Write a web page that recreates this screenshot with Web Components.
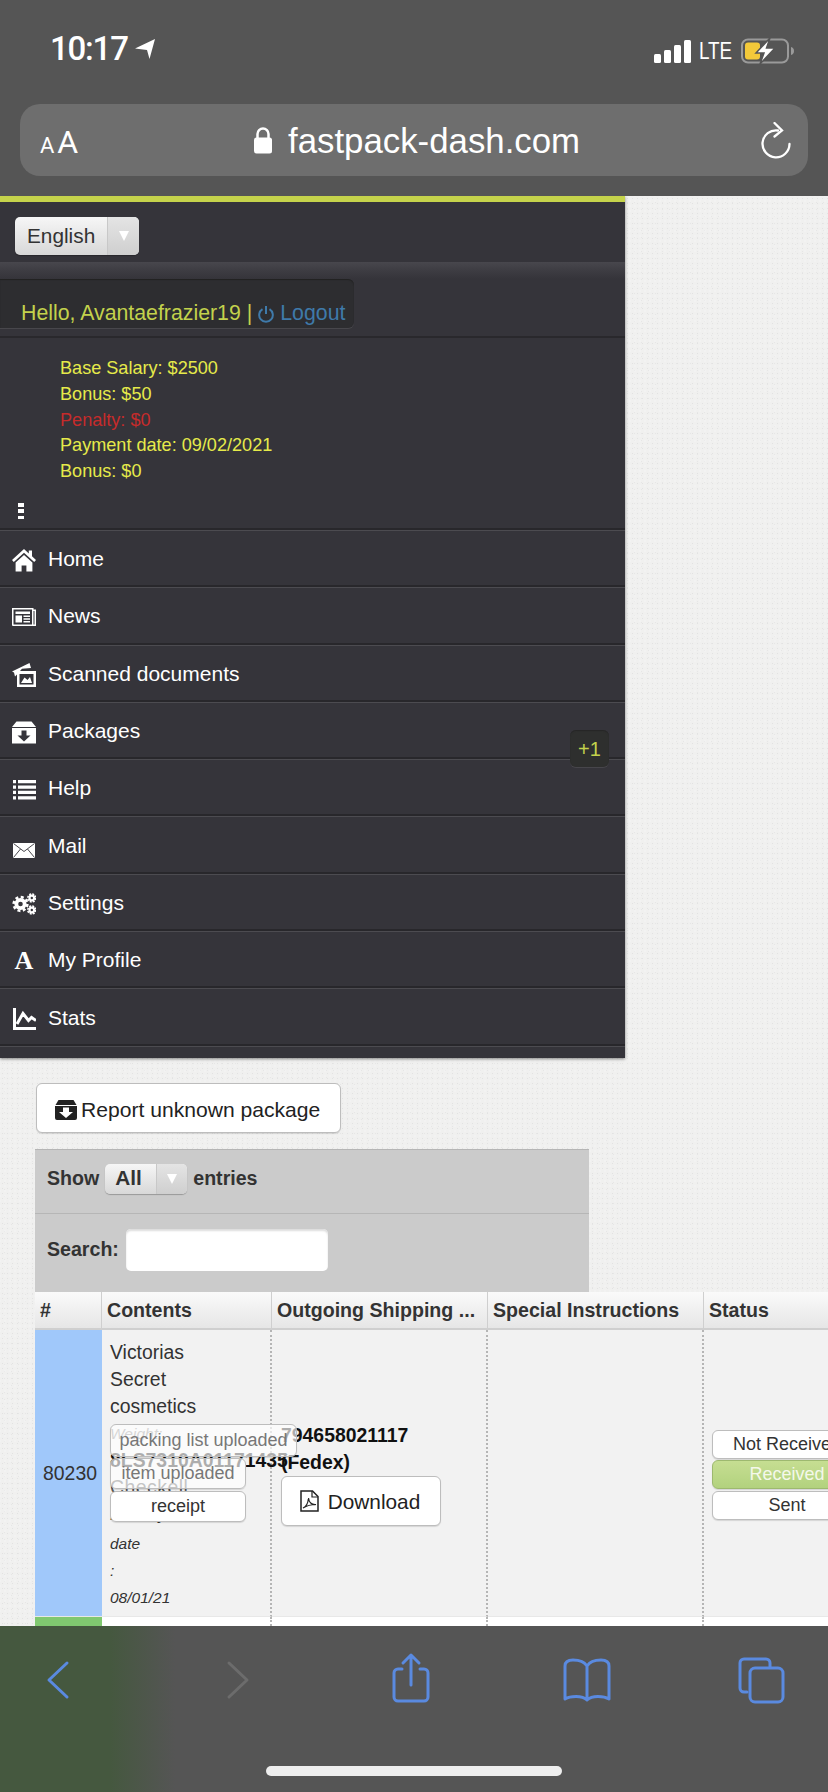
<!DOCTYPE html>
<html lang="en"><head><meta charset="utf-8"><title>fastpack-dash.com</title>
<style>
html,body{margin:0;padding:0;width:828px;height:1792px;overflow:hidden;font-family:"Liberation Sans",Arial,sans-serif;background:#555}
</style></head><body>
<fp-phone>
  <fp-status slot="top"></fp-status>
  <fp-urlbar slot="top"></fp-urlbar>
  <fp-panel>
    <fp-select label="English" w="124" h="38" sep="92"></fp-select>
    <fp-user slot="user"></fp-user>
    <fp-pay slot="pay"></fp-pay>
    <fp-nav label="Home"><svg viewBox="0 0 24 24"><path d="M12 1 L0 12 l1.800 1.900L12 4.800l10.200 9.100L24 12l-4-3.700V2.500h-3.200v2.900z"/><path d="M3.600 14.600 12 7l8.400 7.600V23.500h-6v-6h-4.800v6h-6z"/></svg></fp-nav>
    <fp-nav label="News"><svg viewBox="0 0 24 24"><path fill-rule="evenodd" d="M0 3h21.500v1.500H24V21H1a1 1 0 0 1-1-1zM1.500 4.500V19.500h18.500V4.500zM21.500 6v13.500h1V6z"/><path d="M3.500 6.500h14.500v2.500H3.500zM3.500 10.500h6.500v7H3.500zM11.500 10.500h6.500v1.500h-6.500zM11.500 13.300h6.500v1.500h-6.500zM11.500 16h6.500v1.500h-6.500z"/></svg></fp-nav>
    <fp-nav label="Scanned documents"><svg viewBox="0 0 24 24"><path fill-rule="evenodd" d="M5 8h19v16H5zM7.500 11v10.500H21.500V11z"/><path d="M9 20l3.500-5.500 3 2.500 2.500-3 2 6z"/><path d="M0 8.500 17.500 0l1.500 5-9 .8L4.500 12 3 13.500 2 9.500z"/></svg></fp-nav>
    <fp-nav label="Packages"><svg viewBox="0 0 24 24"><path d="M4.500 1.500h15L24 7H0z"/><path fill-rule="evenodd" d="M0 8h24v15.500H0zM9.500 10.500v5h-4l6.500 6 6.500-6h-4v-5z"/></svg></fp-nav>
    <fp-nav label="Help"><svg viewBox="0 0 24 24"><path d="M1 3h3v3.300H1zM6 3h18v3.300H6zM1 8.400h3v3.300H1zM6 8.400h18v3.300H6zM1 13.800h3v3.300H1zM6 13.800h18v3.300H6zM1 19.200h3v3.300H1zM6 19.200h18v3.300H6z"/></svg></fp-nav>
    <fp-nav label="Mail"><svg viewBox="0 0 24 24"><path d="M1 8h22v15H1z"/><path d="M1.500 8.500 12 16.500 22.500 8.500M1.500 22.500 8.500 14M22.500 22.500 15.500 14" fill="none" stroke="#35343a" stroke-width=".9"/></svg></fp-nav>
    <fp-nav label="Settings"><svg viewBox="0 0 24 24"><g fill="none" stroke="#fff"><circle cx="8.500" cy="12" r="4.200" stroke-width="3.800"/><circle cx="8.500" cy="12" r="6.900" stroke-width="2.500" stroke-dasharray="3 2.420"/><circle cx="19.800" cy="6" r="2.300" stroke-width="2.200"/><circle cx="19.800" cy="6" r="4" stroke-width="1.500" stroke-dasharray="2 1.140"/><circle cx="19.800" cy="18" r="2.300" stroke-width="2.200"/><circle cx="19.800" cy="18" r="4" stroke-width="1.500" stroke-dasharray="2 1.140"/></g></svg></fp-nav>
    <fp-nav label="My Profile"><span class="glyph">A</span></fp-nav>
    <fp-nav label="Stats"><svg viewBox="0 0 24 24"><path d="M1 1h3v19h20v3H1z"/><path d="M5 17 11 6.500l5.500 7 3-3 4.500 3" fill="none" stroke="#fff" stroke-width="3"/></svg></fp-nav>
    <fp-nav last></fp-nav>
    <fp-badge slot="badge">+1</fp-badge>
  </fp-panel>
  <fp-content slot="page">
    <fp-report></fp-report>
    <fp-filter></fp-filter>
    <fp-table></fp-table>
  </fp-content>
  <fp-toolbar slot="bottom"></fp-toolbar>
</fp-phone>
<script>
function def(name, html, setup){
  const tpl=document.createElement('template'); tpl.innerHTML=html;
  customElements.define(name,class extends HTMLElement{
    constructor(){super();this.attachShadow({mode:'open'}).appendChild(tpl.content.cloneNode(true));}
    connectedCallback(){ if(setup) setup(this,this.shadowRoot); }
  });
}
def('fp-phone',`<style>
:host{display:flex;flex-direction:column;width:828px;height:1792px;overflow:hidden;background:#555}
.top{display:block;height:196px;flex:none;background:#555}
.mid{position:relative;flex:none;height:1430px;overflow:hidden;
 background-color:#f0f0ef;
 background-image:radial-gradient(#e2e2e2 .8px,transparent 1px),radial-gradient(#f9f9f9 .8px,transparent 1px),radial-gradient(#e6e6e6 .7px,transparent .9px);
 background-size:5px 5px,5px 5px,7px 7px;background-position:0 0,2.500px 2.500px,1px 3px}
.bot{flex:none;height:166px}
</style><div class="top"><slot name="top"></slot></div>
<div class="mid"><slot></slot><slot name="page"></slot></div>
<div class="bot"><slot name="bottom"></slot></div>`);

def('fp-status',`<style>
:host{display:flex;justify-content:space-between;align-items:flex-start;height:104px;box-sizing:border-box;padding:33px 33px 0 50px;color:#fff}
.time{display:flex;align-items:center;gap:6px;font:500 33px/32px Roboto,sans-serif;letter-spacing:-1.200px;height:32px}
.r{display:flex;align-items:center;height:32px;gap:8px}
.bars{display:flex;align-items:flex-end;gap:3px;height:24px;margin-top:4px}
.bars i{display:block;width:7px;background:#fff;border-radius:1.500px}
.lte{display:block;font:500 23px/24px "Liberation Sans",sans-serif;margin-top:4px;width:34px;white-space:nowrap;transform:scaleX(.82);transform-origin:0 50%}
svg{display:block}
</style>
<div class="time"><span>10:17</span><svg width="22" height="22" viewBox="0 0 22 22" style="margin-top:0"><path d="M21 1 15.500 21l-2.500-9L1 10.500z" fill="#fff"/></svg></div>
<div class="r"><div class="bars"><i style="height:9px"></i><i style="height:13px"></i><i style="height:18px"></i><i style="height:23px"></i></div>
<span class="lte">LTE</span>
<svg width="54" height="26" viewBox="0 0 54 26" style="margin-top:3px"><rect x="1" y="1.500" width="46" height="23" rx="6" fill="none" stroke="#9a9a9a" stroke-width="2"/><rect x="4" y="4.500" width="15" height="17" rx="3" fill="#f3c93a"/><path d="M50 9c2 .5 3 2 3 4s-1 3.500-3 4z" fill="#9a9a9a"/><path d="M29 0 15 15h8l-4 11 15-16h-8.500z" fill="#fff" stroke="#555" stroke-width="1.500"/></svg></div>`);

def('fp-urlbar',`<style>
:host{display:flex;align-items:center;position:relative;margin:0 20px;height:72px;border-radius:20px;background:#6e6e6e;color:#fff}
.aa{position:absolute;left:20px;top:22px;display:flex;align-items:baseline;font:400 22px/32px Roboto,sans-serif}
.aa b{font-weight:400;font-size:32px;margin-left:3px}
.c{display:flex;align-items:center;gap:16px;margin-left:234px;padding-top:1px}
.u{font:400 34.800px/44px "Liberation Sans",sans-serif;white-space:nowrap;margin-top:1px}
svg{display:block}
.re{position:absolute;left:740px;top:18px}
</style>
<span class="aa">A<b>A</b></span>
<div class="c"><svg width="18" height="27" viewBox="0 0 18 27"><path d="M3.500 11V7a5.500 5.500 0 0 1 11 0v4" fill="none" stroke="#fff" stroke-width="2.500"/><rect y="10.500" width="18" height="16" rx="2.500" fill="#fff"/></svg><span class="u">fastpack-dash.com</span></div>
<svg class="re" width="32" height="37" viewBox="0 0 32 37"><path d="M18 8.500A13.500 13.500 0 1 0 29.500 22" fill="none" stroke="#fff" stroke-width="2.300" stroke-linecap="round"/><path d="M14.500 1l7.500 7.500-7.500 6" fill="none" stroke="#fff" stroke-width="2.300" stroke-linecap="round"/></svg>`);

def('fp-panel',`<style>
:host{display:block;position:relative;width:625px;height:862px;box-sizing:border-box;background:#35343a;border-top:6px solid #c5d34b;box-shadow:0 1px 3px rgba(0,0,0,.45)}
.lang{height:60px;box-sizing:border-box;padding:15px 0 0 15px}
.badge{position:absolute;left:570px;top:528px}
</style>
<div class="lang"><slot name="lang"></slot></div><div class="rest"><slot name="user"></slot><slot name="pay"></slot><slot></slot><div class="badge"><slot name="badge"></slot></div></div>`,(el)=>{
  el.querySelector('fp-select').setAttribute('slot','lang');
});

def('fp-select',`<style>
:host{display:inline-flex;box-sizing:border-box;border-radius:5px;background:linear-gradient(#f6f6f6,#d8d8d8);box-shadow:0 1px 1px rgba(0,0,0,.25);color:#333;overflow:hidden;font:20.800px/1 "Liberation Sans",sans-serif}
.t{display:flex;align-items:center;padding-left:12px;box-sizing:border-box}
.a{flex:1;display:flex;align-items:center;justify-content:center;background:linear-gradient(#e4e4e4,#cfcfcf);border-left:1px solid #c8c8c8}
.a i{width:0;height:0;border:5px solid transparent;border-top:10px solid #fff;border-bottom:0}
</style><div class="t"></div><div class="a"><i></i></div>`,(el,sr)=>{
  el.style.width=el.getAttribute('w')+'px';el.style.height=el.getAttribute('h')+'px';
  const t=sr.querySelector('.t');t.textContent=el.getAttribute('label');t.style.width=el.getAttribute('sep')+'px';
  if(el.hasAttribute('bold'))t.style.fontWeight='700';
  if(el.hasAttribute('pad'))t.style.paddingLeft=el.getAttribute('pad')+'px';
});

def('fp-user',`<style>
:host{display:block;height:76px;box-sizing:border-box;padding-top:17px;background:linear-gradient(#48474d 0,#3e3d43 8px,#35343a 17px);border-bottom:2px solid #29282c}
.box{display:flex;align-items:center;width:354px;height:49px;box-sizing:border-box;padding:19px 0 0 21px;background:#2d2d30;border-radius:0 6px 6px 0;box-shadow:inset 0 1px 1px #222,0 1px 0 #48474c;font-size:21.300px;color:#c3d24c;white-space:pre}
svg{margin:1px 6px 0 6px;display:block}
.l{color:#3f7aaa}
</style><div class="box">Hello, Avantaefrazier19 |<svg width="16" height="18" viewBox="0 0 16 18"><path d="M4.500 4.200a6.800 6.800 0 1 0 7 0M8 1v8" fill="none" stroke="#3f7aaa" stroke-width="2"/></svg><span class="l">Logout</span></div>`);

def('fp-pay',`<style>
:host{display:block;height:190px;box-sizing:border-box;padding:18px 0 0 60px;font-size:18.100px;line-height:25.800px;color:#e6ea4a}
.p{color:#c62b2b}
.dots{position:absolute;left:18px;top:301px;width:6px;height:16px;background:repeating-linear-gradient(#fff 0 3.500px,transparent 3.500px 6.300px)}
</style><div>Base Salary: $2500</div><div>Bonus: $50</div><div class="p">Penalty: $0</div><div>Payment date: 09/02/2021</div><div>Bonus: $0</div><div class="dots"></div>`);

def('fp-nav',`<style>
:host{display:flex;align-items:center;height:57.300px;box-sizing:border-box;border-top:2px solid #28272b;box-shadow:inset 0 1px 0 #4c4b50;padding-left:12px;color:#fff;font-size:21px;background:#35343a}
:host([last]){height:13px}
.i{width:24px;height:24px;margin-top:5px;flex:none;fill:#fff;display:flex;align-items:center;justify-content:center}
::slotted(svg){width:24px;height:24px;display:block;fill:#fff}
::slotted(.glyph){font:700 26px/26px "Liberation Serif",serif;color:#fff}
.t{margin-left:12px;margin-top:3px;white-space:nowrap}
</style><div class="i"><slot></slot></div><div class="t"></div>`,(el,sr)=>{sr.querySelector('.t').textContent=el.getAttribute('label')||'';});

def('fp-badge',`<style>
:host{display:flex;align-items:center;justify-content:center;box-sizing:border-box;width:39px;height:37px;padding-top:2px;border-radius:6px;background:#2e2f2e;box-shadow:inset 0 1px 1px #262626,0 1px 0 #47464b;color:#c3d24c;font-size:20px}
</style><slot></slot>`);

def('fp-content',`<style>
:host{display:block;padding:25px 0 0 35px;width:900px;box-sizing:border-box}
</style><slot></slot>`);

def('fp-button',`<style>
:host{display:flex;align-items:center;justify-content:center;box-sizing:border-box;background:#fff;border:1px solid #bdbdbd;border-radius:6px;color:#333;white-space:nowrap;box-shadow:0 1px 1px rgba(0,0,0,.12)}
</style><slot></slot>`);

def('fp-report',`<style>
:host{display:block;margin-bottom:16px}
fp-button{width:305px;height:50px;font-size:21.100px;margin-left:1px;justify-content:flex-start;padding:3px 0 0 18px;gap:4px;color:#222}
svg{display:block}
</style><fp-button><svg width="22" height="20" viewBox="0 0 22 20"><path d="M3.500 0h15L21.500 5H.5z" fill="#222"/><path fill-rule="evenodd" d="M0 6h22v12a2 2 0 0 1-2 2H2a2 2 0 0 1-2-2zM8 7.500v4.500H4l7 6 7-6h-4V7.500z" fill="#222"/></svg>Report unknown package</fp-button>`);

def('fp-filter',`<style>
:host{display:block;width:554px;height:143px;background:#cbcbcb;border-top:1px solid #b5b5b5;box-sizing:border-box;color:#333;font-size:19.600px;font-weight:700}
.a{display:flex;align-items:center;gap:6px;height:64px;box-sizing:border-box;padding:0 0 6px 12px;border-bottom:1px solid #b6b6b6}
.b{display:flex;align-items:center;gap:7px;height:78px;box-sizing:border-box;padding:0 0 7px 12px}
.in{width:202px;height:42px;background:#fff;border-radius:5px;box-shadow:inset 0 2px 2px #ddd}
</style><div class="a">Show<fp-select label="All" w="82" h="30" sep="51" bold pad="10"></fp-select>entries</div><div class="b">Search:<div class="in"></div></div>`);

def('fp-table',`<style>
:host{display:grid;grid-template-columns:67px 170px 216px 216px 216px;width:885px;color:#333;font-size:19.400px}
.h{height:38px;box-sizing:border-box;padding:0 0 0 5px;font-size:19.600px;display:flex;align-items:center;font-weight:700;white-space:nowrap;overflow:hidden;background:linear-gradient(#fafafa,#e6e6e6);border-bottom:2px solid #cfcfcf;border-right:1px solid #cfcfcf}
.h:first-child{padding-left:3px}
.c{height:287px;box-sizing:border-box;background:#f2f2f2;border-right:2px dotted #b5b5b5;position:relative;border-bottom:1px solid #e8e8e8}
.id{background:#a0c8fa;border-right:0;display:flex;align-items:center;justify-content:center;padding-left:3px}
.cont{padding:9px 0 0 8px;line-height:27px;white-space:nowrap;z-index:3}
.it{font-style:italic;font-size:15.500px;color:#333}
.lot{font-weight:700;color:#111}
.ck{color:#555;font-size:19.400px;line-height:27px;letter-spacing:.5px}
.ov{position:absolute;left:8px;font-size:18px;z-index:2}
.tr{background:rgba(255,255,255,.66);color:#777}
.ship{padding:92px 0 0 9px;line-height:27px;font-weight:700;color:#111;white-space:nowrap}
.dl{width:160px;height:50px;font-size:20.800px;font-weight:400;color:#222;gap:9px;padding-right:2px}
.st{padding:100px 0 0 8px;display:flex;flex-direction:column;gap:1px;width:150px}
.st fp-button{width:150px;height:29px;font-size:18px;flex:none}
.st .on{background:linear-gradient(#c6de92,#b2d27e);color:#f4f8ea;border-color:#9db96f;margin-bottom:1px}
.n{height:12px;background:#fff;border-right:2px dotted #b5b5b5;box-sizing:border-box}
.g{background:#80c870;border-right:0}
svg{display:block}
</style>
<div class="h">#</div><div class="h">Contents</div><div class="h">Outgoing Shipping ...</div><div class="h">Special Instructions</div><div class="h">Status</div>
<div class="c id">80230</div>
<div class="c cont">Victorias<br>Secret<br>cosmetics<br><div class="it" style="color:#888">Weight:</div><div class="lot">8LS7310A01171435</div><div class="ck">Checkell</div><div class="it">Delivery</div><div class="it" style="margin-top:1.500px">date</div><div class="it">:</div><div class="it">08/01/21</div>
<fp-button class="ov tr" style="top:94px;width:187px;height:33px">packing list uploaded</fp-button>
<fp-button class="ov tr" style="top:128px;width:136px;height:31px">item uploaded</fp-button>
<fp-button class="ov" style="top:161px;width:136px;height:31px">receipt</fp-button></div>
<div class="c ship">794658021117<br>(Fedex)<fp-button class="dl"><svg width="19" height="22" viewBox="0 0 19 22"><path d="M1 1h11.500L18 6.500V21H1z" fill="#fff" stroke="#222" stroke-width="1.500"/><path d="M12 1v6h6" fill="none" stroke="#222" stroke-width="1.200"/><path d="M3 18c3-1 5-5 5.500-10 .3 4 3 7 7.500 6.500-4 0-9 1-13 3.500z" fill="none" stroke="#222" stroke-width="1.200"/></svg>Download</fp-button></div>
<div class="c"></div>
<div class="c st"><fp-button>Not Received</fp-button><fp-button class="on">Received</fp-button><fp-button>Sent</fp-button></div>
<div class="n g"></div><div class="n"></div><div class="n"></div><div class="n"></div><div class="n"></div>`);

def('fp-toolbar',`<style>
:host{display:block;position:relative;height:166px;background:linear-gradient(90deg,#45583f 0,#45583f 110px,#555 175px)}
svg{position:absolute;display:block;fill:none;stroke:#5a8ae0;stroke-width:3;stroke-linecap:round;stroke-linejoin:round}
.bar{position:absolute;left:266px;top:140px;width:296px;height:10px;border-radius:5px;background:#eee}
</style>
<svg style="left:46px;top:34px" width="24" height="40" viewBox="0 0 24 40"><path d="M21 3 3 20l18 17"/></svg>
<svg style="left:226px;top:34px;stroke:#6c6c6c" width="24" height="40" viewBox="0 0 24 40"><path d="M3 3l18 17L3 37"/></svg>
<svg style="left:391px;top:26px" width="40" height="52" viewBox="0 0 40 52"><path d="M11 17H7a4 4 0 0 0-4 4v24a4 4 0 0 0 4 4h26a4 4 0 0 0 4-4V21a4 4 0 0 0-4-4h-4"/><path d="M20 33V3M12 11l8-8 8 8"/></svg>
<svg style="left:562px;top:32px" width="50" height="44" viewBox="0 0 50 44"><path d="M25 8C22 3 17 2 11 2 6 2 3 4 3 8v33c5-3 17-4 22 1 5-5 17-4 22-1V8c0-4-3-6-8-6-6 0-11 1-14 6zM25 8v33"/></svg>
<svg style="left:738px;top:31px" width="48" height="47" viewBox="0 0 48 47"><path d="M9 35H6a4 4 0 0 1-4-4V6a4 4 0 0 1 4-4h22a4 4 0 0 1 4 4v4"/><rect x="12" y="11" width="33" height="34" rx="5"/></svg>
<div class="bar"></div>`);
</script>
</body></html>
